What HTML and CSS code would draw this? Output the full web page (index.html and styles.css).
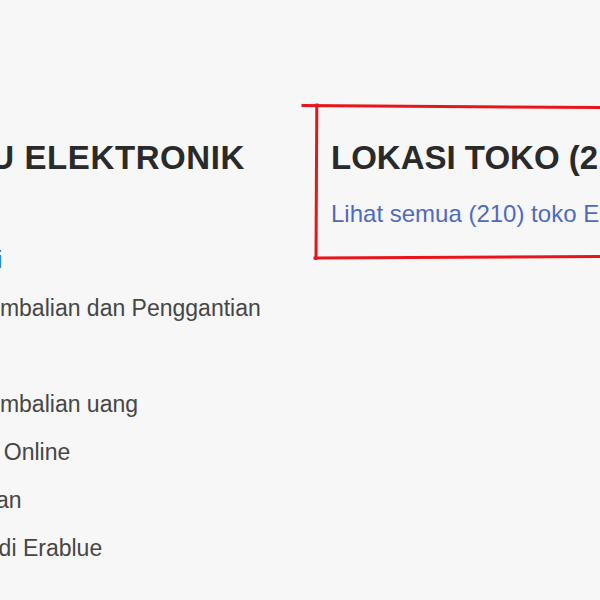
FILE: index.html
```html
<!DOCTYPE html>
<html lang="id">
<head>
<meta charset="utf-8">
<title>Footer Erablue</title>
<link rel="stylesheet" href="styles.css">
</head>
<body>
<footer class="footer">
  <section class="col col-info">
    <h2 class="col-title col-title-info">INFO BARU ELEKTRONIK</h2>
    <ul class="links">
      <li><a class="link link-active" href="#">Informasi garansi</a></li>
      <li><a class="link" href="#">Kebijakan Pengembalian dan Penggantian</a></li>
      <li><a class="link" href="#">Hubungi Kami</a></li>
      <li><a class="link" href="#">Kebijakan Pengembalian uang</a></li>
      <li><a class="link" href="#">Layanan Belanja Online</a></li>
      <li><a class="link" href="#">Kebijakan Layanan</a></li>
      <li><a class="link" href="#">Lowongan Kerja di Erablue</a></li>
    </ul>
  </section>
  <section class="col col-stores">
    <h2 class="col-title">LOKASI TOKO (210)</h2>
    <a class="store-link" href="#">Lihat semua (210) toko Erablue</a>
  </section>
</footer>
<svg class="annotation" width="600" height="600" viewBox="0 0 600 600" aria-hidden="true">
  <path d="M303 105.5 L600 107.5" />
  <path d="M316.8 105 L316 258.5" />
  <path d="M315 258 L600 256.5" />
</svg>
</body>
</html>
```
FILE: styles.css
```css
html, body {
  margin: 0;
  padding: 0;
  width: 600px;
  height: 600px;
  overflow: hidden;
  background: #f7f7f7;
}

body {
  font-family: "Liberation Sans", Arial, sans-serif;
  position: relative;
}

.footer {
  display: grid;
  grid-template-columns: 505px 600px;
  margin-left: -174px;
  padding-top: 139px;
  white-space: nowrap;
}

.col-title {
  margin: 0;
  font-size: 33px;
  line-height: 38px;
  font-weight: bold;
  color: #2a2a2a;
}

.col-title-info {
  letter-spacing: 0.6px;
}

.links {
  list-style: none;
  margin: 59px 0 0;
  padding: 0;
}

.links li {
  font-size: 23px;
  line-height: 48px;
}

.link {
  color: #464646;
  text-decoration: none;
}

.link-active {
  color: #2a78c6;
}

.store-link {
  display: block;
  margin-top: 13px;
  font-size: 24px;
  line-height: 48px;
  color: #4f6ac0;
  text-decoration: none;
}

.annotation {
  position: absolute;
  left: 0;
  top: 0;
  pointer-events: none;
}

.annotation path {
  fill: none;
  stroke: #e8161c;
  stroke-width: 3;
  stroke-linecap: square;
}
```
